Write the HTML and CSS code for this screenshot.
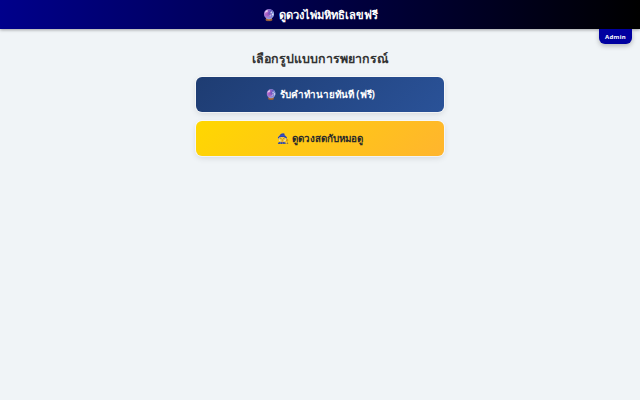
FILE: index.html
```html
<!DOCTYPE html>
<html lang="th">
<head>
    <meta charset="UTF-8">
    <title>ดูดวงไพ่มหิทธิเลขฟรี</title>
    <link rel="stylesheet" href="styles.css">
</head>
<body>
<header class="top">
    <h1 class="top-title">🔮 ดูดวงไพ่มหิทธิเลขฟรี</h1>
    <a href="#" class="admin">Admin</a>
</header>
<main class="choose">
    <h2 class="choose-title">เลือกรูปแบบการพยากรณ์</h2>
    <a href="#" class="btn btn-blue">🔮 รับคำทำนายทันที (ฟรี)</a>
    <a href="#" class="btn btn-gold">🧙 ดูดวงสดกับหมอดู</a>
</main>
</body>
</html>
```
FILE: styles.css
```css
* {
    box-sizing: border-box;
}

html, body {
    height: 100%;
}

body {
    margin: 0;
    background: #f0f4f7;
    color: #333;
    font-family: "Noto Sans", "Liberation Sans", sans-serif;
    overflow: hidden;
}

.top {
    position: relative;
    height: 29px;
    display: flex;
    align-items: center;
    justify-content: center;
    background: linear-gradient(90deg, #00008b, #000);
    box-shadow: 0 1px 3px rgba(0, 0, 0, .35);
}

.top-title {
    margin: 0;
    color: #fff;
    font-size: 11.2px;
    font-weight: 700;
}

.admin {
    position: absolute;
    top: 100%;
    right: 8px;
    width: 33px;
    height: 15px;
    line-height: 16px;
    text-align: center;
    background: #0000a0;
    color: #fff;
    font-size: 6px;
    font-weight: 700;
    letter-spacing: .3px;
    text-decoration: none;
    border-radius: 0 0 6px 6px;
    box-shadow: 0 2px 5px rgba(0, 0, 0, .25);
}

.choose {
    width: 248px;
    margin: 0 auto;
    padding-top: 20px;
    display: flex;
    flex-direction: column;
    gap: 9px;
}

.choose-title {
    margin: 0;
    height: 19px;
    line-height: 19px;
    text-align: center;
    font-size: 12.4px;
    font-weight: 700;
    color: #333;
}

.btn {
    height: 35px;
    display: flex;
    align-items: center;
    justify-content: center;
    border-radius: 6px;
    font-size: 9.8px;
    font-weight: 700;
    text-decoration: none;
    box-shadow: 0 0 0 1px rgba(255, 255, 255, .6), 0 2px 6px rgba(0, 0, 0, .12);
}

.btn-blue {
    background: linear-gradient(135deg, #1e3c72, #2a5298);
    color: #fff;
}

.btn-gold {
    background: linear-gradient(135deg, #ffd700, #ffb52e);
    color: #2a2a2a;
}
```
